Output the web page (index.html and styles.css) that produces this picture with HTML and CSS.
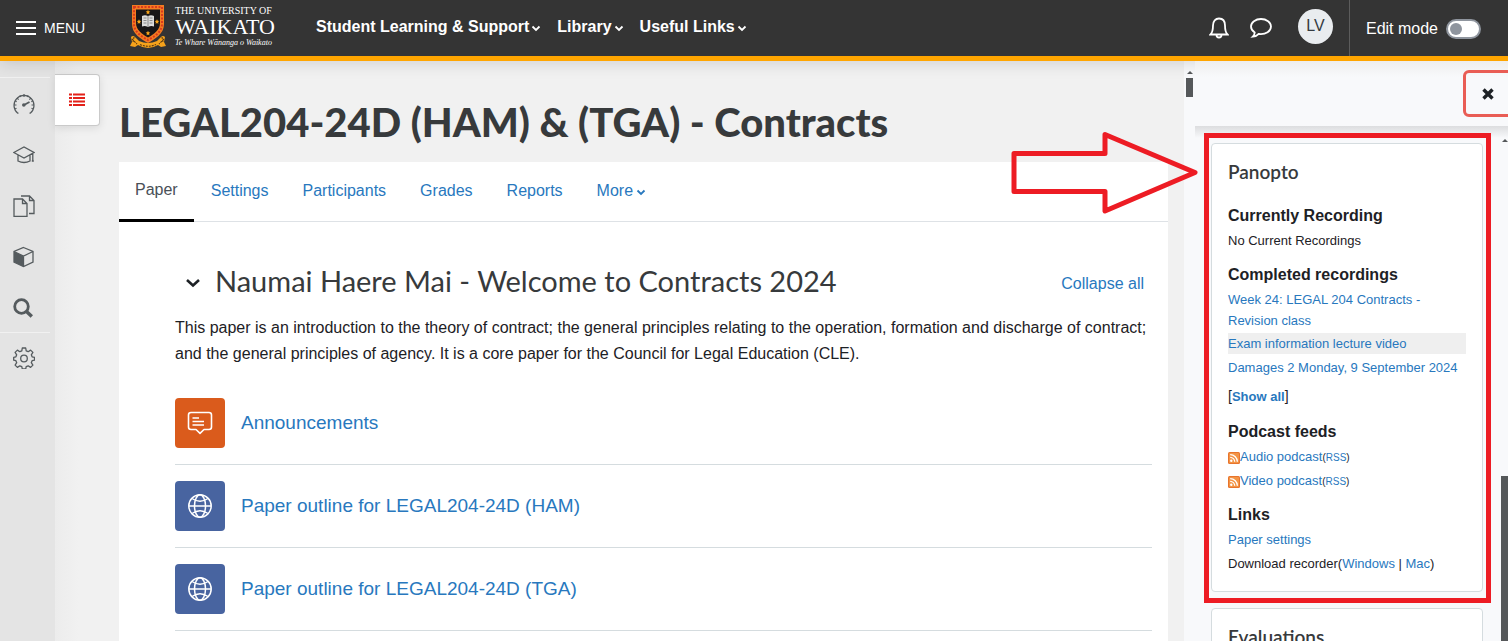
FILE: index.html
```html
<!DOCTYPE html>
<html lang="en">
<head>
<meta charset="utf-8">
<meta name="viewport" content="width=device-width, initial-scale=1">
<title>LEGAL204-24D (HAM) &amp; (TGA) - Contracts</title>
<link rel="stylesheet" href="styles.css">
</head>
<body>
<svg class="symbols" aria-hidden="true">
  <symbol id="chevron" viewBox="0 0 10 8"><path d="M1.500 2.500 5 6 8.500 2.500" fill="none" stroke="currentColor" stroke-width="1.800"/></symbol>
  <symbol id="globe" viewBox="0 0 24 24"><g fill="none" stroke="#fff" stroke-width="1.500"><circle cx="12" cy="12" r="11.200"/><ellipse cx="12" cy="12" rx="5.500" ry="11.200"/><path d="M1 12h22M4 4.500Q12 10 20 4.500M4 19.500Q12 14 20 19.500"/></g></symbol>
  <symbol id="rss" viewBox="0 0 12 12"><rect width="12" height="12" rx="1.500" fill="#e8742c"/><rect x="1" y="1" width="10" height="10" rx="1" fill="#f39445"/><circle cx="3.300" cy="8.800" r="1.200" fill="#fff"/><path d="M2.200 5.300a4.500 4.500 0 0 1 4.500 4.500M2.200 2.600a7.200 7.200 0 0 1 7.200 7.200" fill="none" stroke="#fff" stroke-width="1.300"/></symbol>
</svg>
<header class="topbar">
  <button class="menu" type="button">
    <svg width="20" height="14" viewBox="0 0 20 14"><path d="M0 1h20M0 7h20M0 13h20" stroke="#fff" stroke-width="2"/></svg>
    <span>MENU</span>
  </button>
  <a class="brand" href="#">
    <svg width="38" height="44" viewBox="0 0 38 44">
      <path d="M3 0H35V19C35 29 26 34 19 38C12 34 3 29 3 19Z" fill="#f47b20"/>
      <path d="M5 2H33V19C33 27 25 32 19 35C13 32 5 27 5 19Z" fill="none" stroke="#d93a1e" stroke-width="2" stroke-dasharray="2 1.500"/>
      <path d="M7 4.500H31V18C31 25 25 29 19 32.500C13 29 7 25 7 18Z" fill="#191718"/>
      <path d="M13 11Q16 9.500 19 11Q22 9.500 25 11V21.500Q22 20.500 19 22Q16 20.500 13 21.500Z" fill="#ddd"/>
      <path d="M19 11V22M14.500 13H17.500M14.500 15.500H17.500M14.500 18H17.500M20.500 13H23.500M20.500 15.500H23.500M20.500 18H23.500" stroke="#777" stroke-width=".8"/>
      <g fill="#f9a51a"><path id="star" d="M19 4.800 19.700 6.300 21.300 6.500 20.100 7.600 20.400 9.200 19 8.400 17.600 9.200 17.900 7.600 16.700 6.500 18.300 6.300Z"/><use href="#star" x="-9" y="9.500"/><use href="#star" x="9" y="9.500"/><use href="#star" y="21"/></g>
      <path d="M2 32Q4 30 6 32L10 36Q19 40 28 36L32 32Q34 30 36 32L35 37 37 41 32 42 29 40Q19 46 9 40L6 42 1 41 3 37Z" fill="#f5a21b"/>
      <path d="M3 34 8 39M35 34 30 39M5 32 4 37M33 32 34 37M11 39.500Q19 43 27 39.500" fill="none" stroke="#5b3a12" stroke-width="1.100" stroke-dasharray="2 1"/>
    </svg>
    <span class="wordmark"><span class="wm-top">THE UNIVERSITY OF</span><span class="wm-name">WAIKATO</span><span class="wm-sub">Te Whare Wānanga o Waikato</span></span>
  </a>
  <nav class="topnav">
    <a href="#">Student Learning &amp; Support<svg width="10" height="8"><use href="#chevron"/></svg></a>
    <a href="#">Library<svg width="10" height="8"><use href="#chevron"/></svg></a>
    <a href="#">Useful Links<svg width="10" height="8"><use href="#chevron"/></svg></a>
  </nav>
  <div class="usertools">
    <button type="button" aria-label="Notifications"><svg width="20" height="22" viewBox="0 0 20 22"><path d="M1.500 17.500Q4 15 4 8.500C4 4 6.500 1.500 10 1.500S16 4 16 8.500Q16 15 18.500 17.500ZM7.500 18a2.500 2.500 0 0 0 5 0" fill="none" stroke="#fff" stroke-width="1.800"/></svg></button>
    <button type="button" aria-label="Messages"><svg width="24" height="22" viewBox="0 0 24 22"><path d="M12 2C6.500 2 2 5.300 2 9.500C2 12 3.500 14 5.700 15.500Q5.600 18 3.800 19.700Q7.500 19.400 9.700 16.900C17 17.800 22 14 22 9.500C22 5.300 17.500 2 12 2Z" fill="none" stroke="#fff" stroke-width="1.800"/></svg></button>
    <button class="avatar" type="button">LV</button>
  </div>
  <label class="editmode"><span>Edit mode</span><input type="checkbox" role="switch"></label>
</header>
<div class="shell">
  <nav class="rail">
    <a href="#" aria-label="Dashboard"><svg width="22" height="22" viewBox="0 0 22 22"><g fill="none" stroke="#555b5e" stroke-width="1.200"><path d="M5.500 20.200H4.800A10 10 0 1 1 17.200 20.200H16.500"/><path d="M11 1v3M1 12h2.500M21 12h-2.500M4 5l1.600 1.600M18 5l-1.600 1.600M7 2.400l.7 1.600M15 2.400 14.300 4M2.200 8l1.500.6M19.800 8l-1.500.6M2 16l1.500-.7M20 16l-1.500-.7"/><path d="m11 12 5.500-3" stroke-width="1.800"/></g><circle cx="10.800" cy="12" r="1.800" fill="#555b5e"/></svg></a>
    <a href="#" aria-label="Papers"><svg width="22" height="22" viewBox="0 0 22 22"><path d="M.8 8.500 11 3 21 8.500 11 14ZM5 11v6q6 3 12 0v-6M19.800 9v8M18.800 17h2" fill="none" stroke="#555b5e" stroke-width="1.300"/></svg></a>
    <a href="#" aria-label="Files"><svg width="22" height="22" viewBox="0 0 22 22"><path d="M1 4h8.500l4.500 4.500V21.500H1ZM9.500 4v4.500H14M8 1h8.500L21 5.500V18.500h-5M16.500 1v4.500H21" fill="none" stroke="#555b5e" stroke-width="1.300"/></svg></a>
    <a href="#" aria-label="Resources"><svg width="22" height="22" viewBox="0 0 22 22"><path d="M10.500 1.500 20 5.500V16L10.500 20.500 1 16V5.500ZM1 5.500 10.500 10 20 5.500M10.500 10v10.500" fill="none" stroke="#555b5e" stroke-width="1.300"/><path d="M1 5.500 10.500 10V20.500L1 16Z" fill="#555b5e"/></svg></a>
    <a href="#" aria-label="Search"><svg width="22" height="22" viewBox="0 0 22 22"><circle cx="8.500" cy="9.500" r="6.800" fill="none" stroke="#555b5e" stroke-width="2.800"/><path d="m13.500 14.500 5.300 5" stroke="#555b5e" stroke-width="3.500"/></svg></a>
    <a class="split" href="#" aria-label="Settings"><svg width="22" height="22" viewBox="0 0 22 22"><path id="gear" d="M9.300 1h3.400l.5 2.800 2 .9 2.400-1.600 2.300 2.300-1.600 2.400.8 2 2.400.5v2.900l-2.400.5-.8 2 1.600 2.400-2.300 2.300-2.400-1.600-2 .9-.5 2.300H9.300l-.5-2.300-2-.9-2.400 1.600-2.300-2.300 1.600-2.400-.8-2L.7 13.200v-2.900l2.200-.5.8-2L2.100 5.400 4.400 3.100l2.400 1.600 2-.9Z" fill="none" stroke="#555b5e" stroke-width="1.300" stroke-linejoin="round"/><circle cx="11" cy="11.500" r="3.300" fill="none" stroke="#555b5e" stroke-width="1.300"/></svg></a>
  </nav>
  <main class="page">
    <button class="index-toggle" type="button" aria-label="Open paper index"><svg width="16" height="14" viewBox="0 0 16 14"><path d="M0 1.500h3M4 1.500h12M0 5h3M4 5h12M0 8.500h3M4 8.500h12M0 12h3M4 12h12" stroke="#e32119" stroke-width="2.200"/></svg></button>
    <div class="content">
      <h1>LEGAL204-24D (HAM) &amp; (TGA) - Contracts</h1>
      <div class="sheet">
        <nav class="tabs">
          <a class="active" href="#">Paper</a><a href="#">Settings</a><a href="#">Participants</a><a href="#">Grades</a><a href="#">Reports</a><a href="#">More<svg width="10" height="8"><use href="#chevron"/></svg></a>
        </nav>
        <section class="topic">
          <div class="topic-head">
            <button type="button" aria-label="Collapse"><svg width="16" height="12" viewBox="0 0 16 12"><path d="m2 3 6 5.500L14 3" fill="none" stroke="#1d2125" stroke-width="2.600"/></svg></button>
            <h2>Naumai Haere Mai - Welcome to Contracts 2024</h2>
            <a href="#">Collapse all</a>
          </div>
          <p>This paper is an introduction to the theory of contract; the general principles relating to the operation, formation and discharge of contract; and the general principles of agency. It is a core paper for the Council for Legal Education (CLE).</p>
          <ul class="activities">
            <li><span class="tile forum"><svg width="26" height="24" viewBox="0 0 26 24"><path d="M4 1.500H22Q24.500 1.500 24.500 4V16Q24.500 18.500 22 18.500H17L13 22.300 9 18.500H4Q1.500 18.500 1.500 16V4Q1.500 1.500 4 1.500ZM5.500 7H12M5.500 10.500H17M5.500 14H17" fill="none" stroke="#fff" stroke-width="1.600" stroke-linejoin="round"/></svg></span><a href="#">Announcements</a></li>
            <li><span class="tile link"><svg width="24" height="24"><use href="#globe"/></svg></span><a href="#">Paper outline for LEGAL204-24D (HAM)</a></li>
            <li><span class="tile link"><svg width="24" height="24"><use href="#globe"/></svg></span><a href="#">Paper outline for LEGAL204-24D (TGA)</a></li>
          </ul>
        </section>
      </div>
    </div>
  </main>
  <div class="page-scroll"><i class="up"></i><i class="thumb"></i></div>
  <aside class="drawer">
    <div class="drawer-head"><button class="close" type="button" aria-label="Close"><svg width="12" height="12" viewBox="0 0 12 12"><path d="m1.500 1.500 9 9M10.500 1.500l-9 9" stroke="#1d2125" stroke-width="3.400"/></svg></button></div>
    <div class="drawer-body">
      <div class="blocks">
        <div class="marked">
          <section class="card">
            <h3>Panopto</h3>
            <h4>Currently Recording</h4>
            <p>No Current Recordings</p>
            <h4>Completed recordings</h4>
            <p><a href="#">Week 24: LEGAL 204 Contracts - Revision class</a></p>
            <p class="striped"><a href="#">Exam information lecture video</a></p>
            <p><a href="#">Damages 2 Monday, 9 September 2024</a></p>
            <p class="showall">[<a href="#">Show all</a>]</p>
            <h4>Podcast feeds</h4>
            <p><svg class="rss" width="12" height="12"><use href="#rss"/></svg><a href="#">Audio podcast</a><small>(<a href="#">RSS</a>)</small></p>
            <p><svg class="rss" width="12" height="12"><use href="#rss"/></svg><a href="#">Video podcast</a><small>(<a href="#">RSS</a>)</small></p>
            <h4>Links</h4>
            <p><a href="#">Paper settings</a></p>
            <p>Download recorder(<a href="#">Windows</a> | <a href="#">Mac</a>)</p>
          </section>
        </div>
        <section class="card second"><h3>Evaluations</h3></section>
      </div>
      <div class="drawer-scroll"><i class="up"></i><i class="thumb"></i></div>
    </div>
    <svg class="pointer" width="190" height="86" viewBox="0 0 190 86"><path d="M5 24.500H96V5.500L186 43.500 96 82V62.500H5Z" fill="none" stroke="#ed1c24" stroke-width="5" stroke-linejoin="round"/></svg>
  </aside>
</div>
</body>
</html>
```
FILE: styles.css
```css
* { box-sizing: border-box; }
body {
  margin: 0;
  height: 100vh;
  overflow: hidden;
  display: flex;
  flex-direction: column;
  font: 16px/24px "Liberation Sans", Arial, sans-serif;
  color: #1d2125;
  background: #f1f1f1;
}
a { color: #2878be; text-decoration: none; }
button { border: 0; padding: 0; background: none; font: inherit; color: inherit; }
h1, h2, h3, h4, p, ul { margin: 0; padding: 0; }
svg { flex: none; }
.symbols { position: absolute; width: 0; height: 0; }

.topbar {
  flex: none;
  display: flex;
  align-items: center;
  height: 61px;
  background: #343434;
  border-bottom: 5px solid #ffa500;
  color: #fff;
  box-shadow: 0 2px 16px rgba(0, 0, 0, .14);
  position: relative;
}
.menu { display: flex; align-items: center; gap: 8px; width: 129px; padding: 0 0 1px 16px; font-size: 14px; }
.brand { display: flex; align-items: center; gap: 8px; width: 187px; padding-bottom: 3px; color: #fff; }
.wordmark { display: flex; flex-direction: column; font-family: "Liberation Serif", "Times New Roman", serif; white-space: nowrap; }
.wm-top { font-size: 10px; line-height: 10px; }
.wm-name { font-size: 22px; line-height: 22px; }
.wm-sub { font-size: 8px; line-height: 10px; font-style: italic; }
.topnav { display: flex; gap: 16px; flex: 1; white-space: nowrap; padding-bottom: 2px; }
.topnav a { color: #fff; font-weight: bold; }
.topnav svg { margin-left: 2px; }
.tabs svg { margin-left: 3px; }
.usertools { display: flex; align-items: center; gap: 20px; padding-right: 16px; }
.usertools button { display: flex; }
.usertools .avatar {
  width: 35px; height: 35px; margin: 0 0 4px 5px;
  align-items: center; justify-content: center;
  border-radius: 50%; background: #e9ecef; color: #343a40;
}
.editmode {
  display: flex; align-items: center; gap: 8px; align-self: stretch;
  padding: 2px 27px 0 16px; border-left: 1px solid #5c5c5c;
}
.editmode input {
  appearance: none; margin: 0; width: 35px; height: 20px; padding: 2px;
  border: 2px solid #8f959e; border-radius: 10px; background: #fff;
}
.editmode input::before { content: ""; display: block; width: 12px; height: 12px; border-radius: 50%; background: #8f959e; }

.shell { flex: 1; min-height: 0; display: flex; }
.rail { flex: none; width: 55px; padding-top: 16px; background: #e4e4e4; }
.rail a { display: flex; align-items: center; height: 51px; margin-right: 5px; padding: 2px 0 0 13px; }
.rail a:first-child, .rail .split { border-top: 1px solid #f1f1f1; }
.rail .split { padding-top: 0; }
.page { flex: 1; min-width: 0; display: flex; align-items: flex-start; padding-right: 16px; background: linear-gradient(90deg, #ececec, #f1f1f1 24px); }
.index-toggle {
  flex: none; width: 45px; height: 52px; margin-top: 13px;
  display: flex; align-items: center; justify-content: center;
  background: #fff; border: 1px solid #cacaca; border-left: 0; border-radius: 0 4px 4px 0;
  box-shadow: 0 2px 8px rgba(0, 0, 0, .1);
}
.content { flex: 1; min-width: 0; padding: 37px 0 0 19px; }
h1 { font: 900 40px/48px Lato, sans-serif; color: #373a3c; }
.sheet { margin-top: 16px; background: #fff; min-height: 640px; }
.tabs { display: flex; height: 60px; border-bottom: 1px solid #dee2e6; }
.tabs a { padding: 16px 17px; line-height: 25px; }
.tabs .active { height: 60px; padding: 16px 16px 13px; line-height: 24px; color: #495057; border-bottom: 3px solid #000; }
.topic { padding: 40px 16px 0 56px; }
.topic-head { display: flex; align-items: center; height: 42px; padding: 0 8px 0 10px; }
.topic-head button { display: flex; width: 30px; }
.topic-head h2 { flex: 1; padding-bottom: 4px; font: 400 29px/38px Lato, sans-serif; color: #373a3c; }
.topic-head a { padding-top: 2px; }
.topic p { margin-top: 11px; line-height: 26px; }
.activities { list-style: none; margin-top: 15px; }
.activities li { display: flex; align-items: center; gap: 16px; height: 83px; border-bottom: 1px solid #d5dcdf; font-size: 19px; }
.tile { width: 50px; height: 50px; border-radius: 4px; display: flex; align-items: center; justify-content: center; }
.forum { background: #da5b1c; }
.link { background: #4864a0; }

.up { display: block; border: 3px solid transparent; border-top: 0; border-bottom: 3px solid #55585a; width: 6px; margin: 0 auto; }
.thumb { display: block; background: #55585a; }
.page-scroll { flex: none; width: 11px; padding-top: 10px; background: #f8f9fb; }
.page-scroll .thumb { width: 7px; height: 19px; margin: 4px 0 0 2px; }

.drawer { position: relative; flex: none; width: 313px; display: flex; flex-direction: column; background: #f8f9fb; }
.drawer-head { flex: none; display: flex; justify-content: flex-end; height: 65px; padding-top: 9px; overflow: hidden; background: linear-gradient(#eee, #f8f9fb 16px); }
.close {
  flex: none; width: 50px; height: 47px; margin-right: -5px;
  display: flex; align-items: center; justify-content: center;
  border: 3px solid #e95d55; border-radius: 6px;
}
.drawer-body { flex: 1; min-height: 0; display: flex; justify-content: space-between; overflow: hidden; background: linear-gradient(#dcdddf, #f8f9fb 12px); }
.blocks { width: 287px; margin: 7px 0 0 9px; }
.marked { padding: 5px 3px 6px 2px; border: 5px solid #ed1c24; }
.card { padding: 15px 16px 14px; background: #fff; border: 1px solid #d5dcdf; border-radius: 4px; font-size: 13px; line-height: 21px; }
.card h3 { font: 600 19px/26px Lato, sans-serif; color: #373a3c; }
.card h4 { font-size: 16px; line-height: 20px; margin: 14px 0 4px; }
.card h3 + h4 { margin-top: 21px; }
.card p { margin-bottom: 3px; }
.card p:has(+ .striped) { margin-bottom: 2px; }
.striped { background: #efefef; }
.card .showall { margin: 8px 0 15px; font-size: 14px; }
.showall a { font-size: 13px; font-weight: bold; }
.card small { font-size: 10px; line-height: 10px; }
.rss { vertical-align: -3px; }
.second { margin: 5px 8px 0 7px; height: 80px; }
.drawer-scroll { width: 7px; padding-top: 13px; }
.drawer-scroll .thumb { height: 200px; margin-top: 334px; }
.pointer { position: absolute; left: -186px; top: 68px; }
```
